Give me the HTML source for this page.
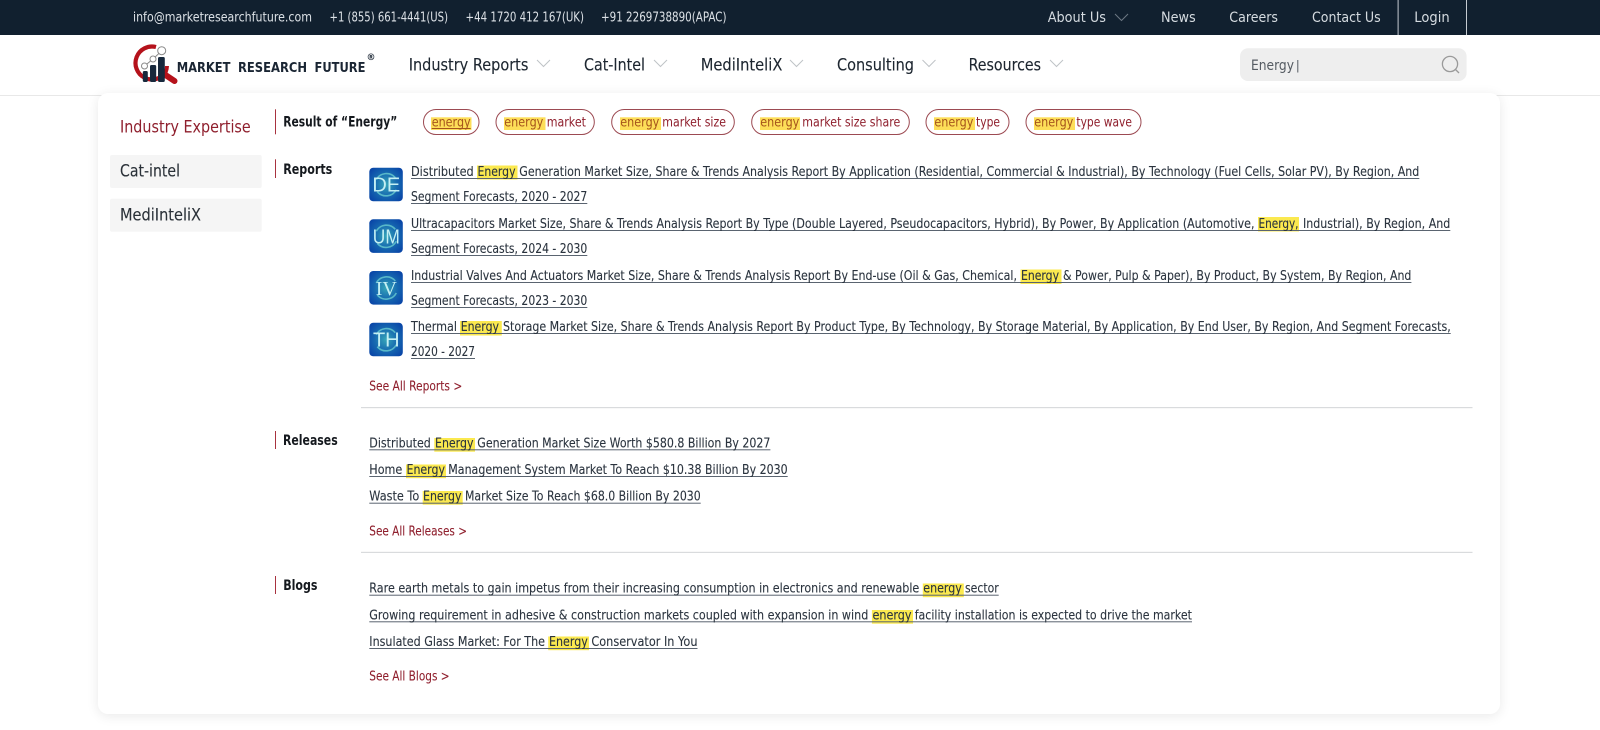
<!DOCTYPE html>
<html lang="en"><head><meta charset="utf-8"><title>Market Research Future</title>
<style>
html,body{margin:0;padding:0;background:#fff;width:1600px;height:730px;overflow:hidden}
.top{position:absolute;left:0;top:0;width:1600px;height:35px;background:#11202f}
.hl{position:absolute;left:0;top:95px;width:1600px;height:1px;background:#e8e8e8}
.panel{position:absolute;left:98px;top:93px;width:1402px;height:621px;background:#fff;border-radius:10px;box-shadow:0 2px 12px rgba(0,0,0,.09)}
svg{position:absolute;left:0;top:0;display:block;filter:blur(.3px)}
text{font-family:"DejaVu Sans","Liberation Sans",sans-serif;white-space:pre}
.tb text{font-size:13px;fill:#dce1e6}
.tn text{font-size:14.5px;fill:#d5dbe0}
.nv text{font-size:16.5px;fill:#1d2630;stroke:#1d2630;stroke-width:.12px}
.lk text{font-size:13px;fill:#2a333e;stroke:#2a333e;stroke-width:.1px}
.rd text{font-size:13px;fill:#8f1f2d;stroke:#8f1f2d;stroke-width:.08px}
.hd text{font-size:14px;font-weight:700;fill:#15191e}
.sd text{font-size:16.5px;fill:#2a3138;stroke:#2a3138;stroke-width:.1px}
.tg text{font-size:13.5px;fill:#8f1f2d}
.tg .e{fill:#a5541c}
.lg text{font-family:"DejaVu Sans",sans-serif;font-weight:700;font-size:13px;fill:#1a2533}
.ic text{font-family:"Liberation Sans",sans-serif;font-size:20px;fill:#c4f0f4;text-anchor:middle}
</style></head><body>
<div class="top"></div><div class="hl"></div><div class="panel"></div>
<svg width="1600" height="730" viewBox="0 0 1600 730" xmlns="http://www.w3.org/2000/svg">
<defs>
<radialGradient id="ig" cx="50%" cy="50%" r="62%"><stop offset="0" stop-color="#36a6b8"/><stop offset=".55" stop-color="#1669b0"/><stop offset="1" stop-color="#0a47a8"/></radialGradient>
</defs>

<!-- top bar -->
<g class="tb">
<text x="133" y="21.5" textLength="179" lengthAdjust="spacingAndGlyphs">info@marketresearchfuture.com</text>
<text x="329.5" y="21.5" textLength="118.5" lengthAdjust="spacingAndGlyphs">+1 (855) 661-4441(US)</text>
<text x="465.5" y="21.5" textLength="118.5" lengthAdjust="spacingAndGlyphs">+44 1720 412 167(UK)</text>
<text x="601" y="21.5" textLength="125.5" lengthAdjust="spacingAndGlyphs">+91 2269738890(APAC)</text>
</g>
<g class="tn">
<text x="1047.7" y="22" textLength="58.3" lengthAdjust="spacingAndGlyphs">About Us</text>
<text x="1161" y="22" textLength="34.7" lengthAdjust="spacingAndGlyphs">News</text>
<text x="1229.3" y="22" textLength="48.7" lengthAdjust="spacingAndGlyphs">Careers</text>
<text x="1312" y="22" textLength="68.7" lengthAdjust="spacingAndGlyphs">Contact Us</text>
<text x="1414.3" y="22" textLength="35.4" lengthAdjust="spacingAndGlyphs">Login</text>
</g>
<path d="M1115 14l6.5 6.5 6.5-6.5" fill="none" stroke="#6d7884" stroke-width="1"/>
<rect x="1397.6" y="0" width="1" height="35" fill="#c5cbd1"/>
<rect x="1466" y="0" width="1" height="35" fill="#c5cbd1"/>

<!-- logo -->
<path d="M156 47A16.500 16.500 0 1 0 165.500 72.500" fill="none" stroke="#b5121b" stroke-width="4.200"/>
<path d="M167 66A16.500 16.500 0 0 1 165.500 72.500" fill="none" stroke="#b5121b" stroke-width="4"/>
<path d="M165.500 75L174.500 81" stroke="#b5121b" stroke-width="6" stroke-linecap="round"/>
<rect x="142.800" y="71" width="5" height="11" rx="1.500" fill="#17283c"/>
<rect x="150" y="65" width="6.200" height="17" rx="1.500" fill="#17283c"/>
<rect x="158" y="57" width="6.800" height="25" rx="1.500" fill="#17283c"/>
<path d="M144.500 66L153 59L161.500 51" fill="none" stroke="#8a8a8a" stroke-width="1"/>
<circle cx="161.700" cy="50.700" r="4" fill="#fff" stroke="#8a8a8a" stroke-width="1"/>
<circle cx="153" cy="59" r="3" fill="#fff" stroke="#8a8a8a" stroke-width="1"/>
<circle cx="144.500" cy="66" r="3" fill="#fff" stroke="#8a8a8a" stroke-width="1"/>
<g class="lg">
<text x="176.700" y="72" textLength="53.800" lengthAdjust="spacingAndGlyphs">MARKET</text>
<text x="238" y="72" textLength="69" lengthAdjust="spacingAndGlyphs">RESEARCH</text>
<text x="314.500" y="72" textLength="51" lengthAdjust="spacingAndGlyphs">FUTURE</text>
<text x="366.500" y="60" style="font-size:9px">®</text>
</g>

<!-- nav -->
<g class="nv">
<text x="408.700" y="70.700" textLength="119.700" lengthAdjust="spacingAndGlyphs">Industry Reports</text>
<text x="584" y="70.700" textLength="61" lengthAdjust="spacingAndGlyphs">Cat-Intel</text>
<text x="700.700" y="70.700" textLength="81.700" lengthAdjust="spacingAndGlyphs">MediInteliX</text>
<text x="837" y="70.700" textLength="77" lengthAdjust="spacingAndGlyphs">Consulting</text>
<text x="968.600" y="70.700" textLength="72.400" lengthAdjust="spacingAndGlyphs">Resources</text>
</g>
<g fill="none" stroke="#bfc3c7" stroke-width="1">
<path d="M537 60l6.500 6.500 6.500-6.500"/><path d="M654 60l6.500 6.500 6.500-6.500"/><path d="M790 60l6.500 6.500 6.500-6.500"/><path d="M922.500 60l6.500 6.500 6.500-6.500"/><path d="M1050 60l6.500 6.500 6.500-6.500"/>
</g>

<!-- search -->
<rect x="1240" y="48.300" width="226.600" height="32.700" rx="8" fill="#eeeeee"/>
<text x="1251" y="70" textLength="43" lengthAdjust="spacingAndGlyphs" style="font-size:14.500px;fill:#555b62">Energy</text>
<rect x="1297.300" y="60" width="1" height="12.500" fill="#555b62"/>
<circle cx="1450" cy="64" r="7.600" fill="none" stroke="#9a9a9a" stroke-width="1.300"/>
<path d="M1455.500 69.500L1459 73" stroke="#9a9a9a" stroke-width="1.300" fill="none"/>

<!-- sidebar -->
<text x="120" y="132.300" textLength="130.700" lengthAdjust="spacingAndGlyphs" style="font-size:16.500px;fill:#8f1f2d">Industry Expertise</text>
<rect x="110" y="155" width="151.700" height="33" fill="#f5f5f5" rx="2"/>
<rect x="110" y="198.700" width="151.700" height="33" fill="#f5f5f5" rx="2"/>
<g class="sd">
<text x="120" y="176.700" textLength="60" lengthAdjust="spacingAndGlyphs">Cat-intel</text>
<text x="120" y="220.700" textLength="81" lengthAdjust="spacingAndGlyphs">MediInteliX</text>
</g>

<!-- section bars -->
<g fill="#a8323f">
<rect x="275" y="109.300" width="1" height="25"/>
<rect x="275" y="159.300" width="1" height="18.700"/>
<rect x="275" y="431" width="1" height="18"/>
<rect x="275" y="576" width="1" height="18"/>
</g>
<g class="hd">
<text x="283.200" y="126.700" textLength="114.100" lengthAdjust="spacingAndGlyphs">Result of “Energy”</text>
<text x="283.200" y="174" textLength="49.100" lengthAdjust="spacingAndGlyphs">Reports</text>
<text x="283" y="445" textLength="54.700" lengthAdjust="spacingAndGlyphs">Releases</text>
<text x="283.200" y="590" textLength="34.300" lengthAdjust="spacingAndGlyphs">Blogs</text>
</g>

<!-- tags -->
<g fill="#fff" stroke="#9c4a52" stroke-width="1">
<rect x="423.500" y="109.500" width="55.500" height="25" rx="12.500"/>
<rect x="496" y="109.500" width="98.300" height="25" rx="12.500"/>
<rect x="611.700" y="109.500" width="122.600" height="25" rx="12.500"/>
<rect x="751.700" y="109.500" width="157.600" height="25" rx="12.500"/>
<rect x="926" y="109.500" width="83" height="25" rx="12.500"/>
<rect x="1026" y="109.500" width="115" height="25" rx="12.500"/>
</g>
<g fill="#fdde58">
<rect x="431" y="117.300" width="40.500" height="12.700"/>
<rect x="504" y="117.300" width="41.500" height="12.700"/>
<rect x="620" y="117.300" width="41" height="12.700"/>
<rect x="760" y="117.300" width="40" height="12.700"/>
<rect x="934" y="117.300" width="41" height="12.700"/>
<rect x="1034" y="117.300" width="41" height="12.700"/>
</g>
<g class="tg">
<text class="e" x="431.700" y="126.700" textLength="39" lengthAdjust="spacingAndGlyphs">energy</text>
<text class="e" x="504.300" y="126.700" textLength="39" lengthAdjust="spacingAndGlyphs">energy</text>
<text x="546.700" y="126.700" textLength="39.300" lengthAdjust="spacingAndGlyphs">market</text>
<text class="e" x="620.300" y="126.700" textLength="39" lengthAdjust="spacingAndGlyphs">energy</text>
<text x="662.300" y="126.700" textLength="63.700" lengthAdjust="spacingAndGlyphs">market size</text>
<text class="e" x="760.300" y="126.700" textLength="39" lengthAdjust="spacingAndGlyphs">energy</text>
<text x="802.300" y="126.700" textLength="98" lengthAdjust="spacingAndGlyphs">market size share</text>
<text class="e" x="934.400" y="126.700" textLength="39" lengthAdjust="spacingAndGlyphs">energy</text>
<text x="976" y="126.700" textLength="24" lengthAdjust="spacingAndGlyphs">type</text>
<text class="e" x="1034.300" y="126.700" textLength="39" lengthAdjust="spacingAndGlyphs">energy</text>
<text x="1076.400" y="126.700" textLength="55.600" lengthAdjust="spacingAndGlyphs">type wave</text>
</g>
<rect x="431.700" y="128" width="39" height="1" fill="#a5541c"/>

<!-- icons -->
<g class="ic">
<g transform="translate(369.300,167.700)"><rect width="33.500" height="33.600" rx="4" fill="url(#ig)"/><path d="M7 12A11.500 11.500 0 0 1 26 10M27 22A11.500 11.500 0 0 1 8 24" fill="none" stroke="#58b8c9" stroke-width="1.600"/><text x="17" y="24">DE</text></g>
<g transform="translate(369.300,219.300)"><rect width="33.500" height="33.600" rx="4" fill="url(#ig)"/><path d="M7 12A11.500 11.500 0 0 1 26 10M27 22A11.500 11.500 0 0 1 8 24" fill="none" stroke="#58b8c9" stroke-width="1.600"/><text x="17" y="24" textLength="27" lengthAdjust="spacingAndGlyphs">UM</text></g>
<g transform="translate(369.300,271)"><rect width="33.500" height="33.600" rx="4" fill="url(#ig)"/><path d="M7 12A11.500 11.500 0 0 1 26 10M27 22A11.500 11.500 0 0 1 8 24" fill="none" stroke="#58b8c9" stroke-width="1.600"/><text x="17" y="24" style="font-family:'Liberation Serif',serif">IV</text></g>
<g transform="translate(369.300,322.700)"><rect width="33.500" height="33.600" rx="4" fill="url(#ig)"/><path d="M7 12A11.500 11.500 0 0 1 26 10M27 22A11.500 11.500 0 0 1 8 24" fill="none" stroke="#58b8c9" stroke-width="1.600"/><text x="17" y="24">TH</text></g>
</g>

<!-- highlights -->
<g fill="#fbe94f">
<rect x="477" y="165.500" width="40.500" height="14"/>
<rect x="1258" y="217" width="41" height="14.500"/>
<rect x="1020.500" y="269.500" width="41" height="14.500"/>
<rect x="460" y="321" width="41.800" height="14.500"/>
<rect x="434.300" y="438" width="40.700" height="13.700"/>
<rect x="406" y="464.500" width="40" height="13.700"/>
<rect x="422.700" y="491" width="40" height="13.700"/>
<rect x="922.800" y="583.500" width="41" height="13.700"/>
<rect x="871.900" y="610" width="41.100" height="13.700"/>
<rect x="548.200" y="636.500" width="40.800" height="13.700"/>
</g>

<!-- underlines -->
<g fill="#5a6470">
<rect x="411" y="178" width="1008.300" height="1"/>
<rect x="411" y="203" width="176.300" height="1"/>
<rect x="411" y="230" width="1039.300" height="1"/>
<rect x="411" y="255" width="176.300" height="1"/>
<rect x="411" y="282" width="1000.400" height="1"/>
<rect x="411" y="307" width="176.300" height="1"/>
<rect x="411" y="333" width="1039.700" height="1"/>
<rect x="411" y="358" width="64" height="1"/>
<rect x="369.300" y="449.300" width="401.100" height="1"/>
<rect x="369.300" y="476" width="418.400" height="1"/>
<rect x="369.300" y="502.700" width="331.400" height="1"/>
<rect x="369.300" y="594.700" width="629.400" height="1"/>
<rect x="369.300" y="621.300" width="822.700" height="1"/>
<rect x="369.300" y="648" width="328.200" height="1"/>
</g>

<!-- report lines -->
<g class="lk">
<text x="411" y="176" textLength="62.700" lengthAdjust="spacingAndGlyphs">Distributed</text>
<text x="477.500" y="176" textLength="38" lengthAdjust="spacingAndGlyphs">Energy</text>
<text x="519.300" y="176" textLength="900" lengthAdjust="spacingAndGlyphs">Generation Market Size, Share &amp; Trends Analysis Report By Application (Residential, Commercial &amp; Industrial), By Technology (Fuel Cells, Solar PV), By Region, And</text>
<text x="411" y="201" textLength="176.300" lengthAdjust="spacingAndGlyphs">Segment Forecasts, 2020 - 2027</text>
<text x="411" y="228" textLength="843.500" lengthAdjust="spacingAndGlyphs">Ultracapacitors Market Size, Share &amp; Trends Analysis Report By Type (Double Layered, Pseudocapacitors, Hybrid), By Power, By Application (Automotive,</text>
<text x="1258.500" y="228" textLength="40" lengthAdjust="spacingAndGlyphs">Energy,</text>
<text x="1303" y="228" textLength="147.300" lengthAdjust="spacingAndGlyphs">Industrial), By Region, And</text>
<text x="411" y="253" textLength="176.300" lengthAdjust="spacingAndGlyphs">Segment Forecasts, 2024 - 2030</text>
<text x="411" y="280" textLength="606" lengthAdjust="spacingAndGlyphs">Industrial Valves And Actuators Market Size, Share &amp; Trends Analysis Report By End-use (Oil &amp; Gas, Chemical,</text>
<text x="1021" y="280" textLength="38" lengthAdjust="spacingAndGlyphs">Energy</text>
<text x="1063" y="280" textLength="348.400" lengthAdjust="spacingAndGlyphs">&amp; Power, Pulp &amp; Paper), By Product, By System, By Region, And</text>
<text x="411" y="305" textLength="176.300" lengthAdjust="spacingAndGlyphs">Segment Forecasts, 2023 - 2030</text>
<text x="411" y="331" textLength="46" lengthAdjust="spacingAndGlyphs">Thermal</text>
<text x="460.700" y="331" textLength="38.300" lengthAdjust="spacingAndGlyphs">Energy</text>
<text x="503" y="331" textLength="947.700" lengthAdjust="spacingAndGlyphs">Storage Market Size, Share &amp; Trends Analysis Report By Product Type, By Technology, By Storage Material, By Application, By End User, By Region, And Segment Forecasts,</text>
<text x="411" y="356" textLength="64" lengthAdjust="spacingAndGlyphs">2020 - 2027</text>

<text x="369.300" y="447.300" textLength="61.500" lengthAdjust="spacingAndGlyphs">Distributed</text>
<text x="435" y="447.300" textLength="38.500" lengthAdjust="spacingAndGlyphs">Energy</text>
<text x="477.300" y="447.300" textLength="293.100" lengthAdjust="spacingAndGlyphs">Generation Market Size Worth $580.8 Billion By 2027</text>
<text x="369.300" y="474" textLength="33" lengthAdjust="spacingAndGlyphs">Home</text>
<text x="406.500" y="474" textLength="38.500" lengthAdjust="spacingAndGlyphs">Energy</text>
<text x="448.300" y="474" textLength="339.400" lengthAdjust="spacingAndGlyphs">Management System Market To Reach $10.38 Billion By 2030</text>
<text x="369.300" y="500.700" textLength="50" lengthAdjust="spacingAndGlyphs">Waste To</text>
<text x="423" y="500.700" textLength="38.500" lengthAdjust="spacingAndGlyphs">Energy</text>
<text x="465" y="500.700" textLength="235.700" lengthAdjust="spacingAndGlyphs">Market Size To Reach $68.0 Billion By 2030</text>

<text x="369.300" y="592.700" textLength="550" lengthAdjust="spacingAndGlyphs">Rare earth metals to gain impetus from their increasing consumption in electronics and renewable</text>
<text x="923.300" y="592.700" textLength="38.500" lengthAdjust="spacingAndGlyphs">energy</text>
<text x="965" y="592.700" textLength="33.700" lengthAdjust="spacingAndGlyphs">sector</text>
<text x="369.300" y="619.300" textLength="499" lengthAdjust="spacingAndGlyphs">Growing requirement in adhesive &amp; construction markets coupled with expansion in wind</text>
<text x="872.500" y="619.300" textLength="39" lengthAdjust="spacingAndGlyphs">energy</text>
<text x="914.700" y="619.300" textLength="277.300" lengthAdjust="spacingAndGlyphs">facility installation is expected to drive the market</text>
<text x="369.300" y="646" textLength="175.700" lengthAdjust="spacingAndGlyphs">Insulated Glass Market: For The</text>
<text x="549" y="646" textLength="38.800" lengthAdjust="spacingAndGlyphs">Energy</text>
<text x="591.400" y="646" textLength="106.100" lengthAdjust="spacingAndGlyphs">Conservator In You</text>
</g>

<!-- see all -->
<g class="rd">
<text x="369.300" y="390.700" textLength="93" lengthAdjust="spacingAndGlyphs">See All Reports &gt;</text>
<text x="369.300" y="535.700" textLength="97.700" lengthAdjust="spacingAndGlyphs">See All Releases &gt;</text>
<text x="369.300" y="680.700" textLength="80.300" lengthAdjust="spacingAndGlyphs">See All Blogs &gt;</text>
</g>

<!-- dividers -->
<rect x="361" y="407" width="1111.500" height="1.200" fill="#d9dbdd"/>
<rect x="361" y="551.800" width="1111.500" height="1.200" fill="#d9dbdd"/>
</svg>
</body></html>
